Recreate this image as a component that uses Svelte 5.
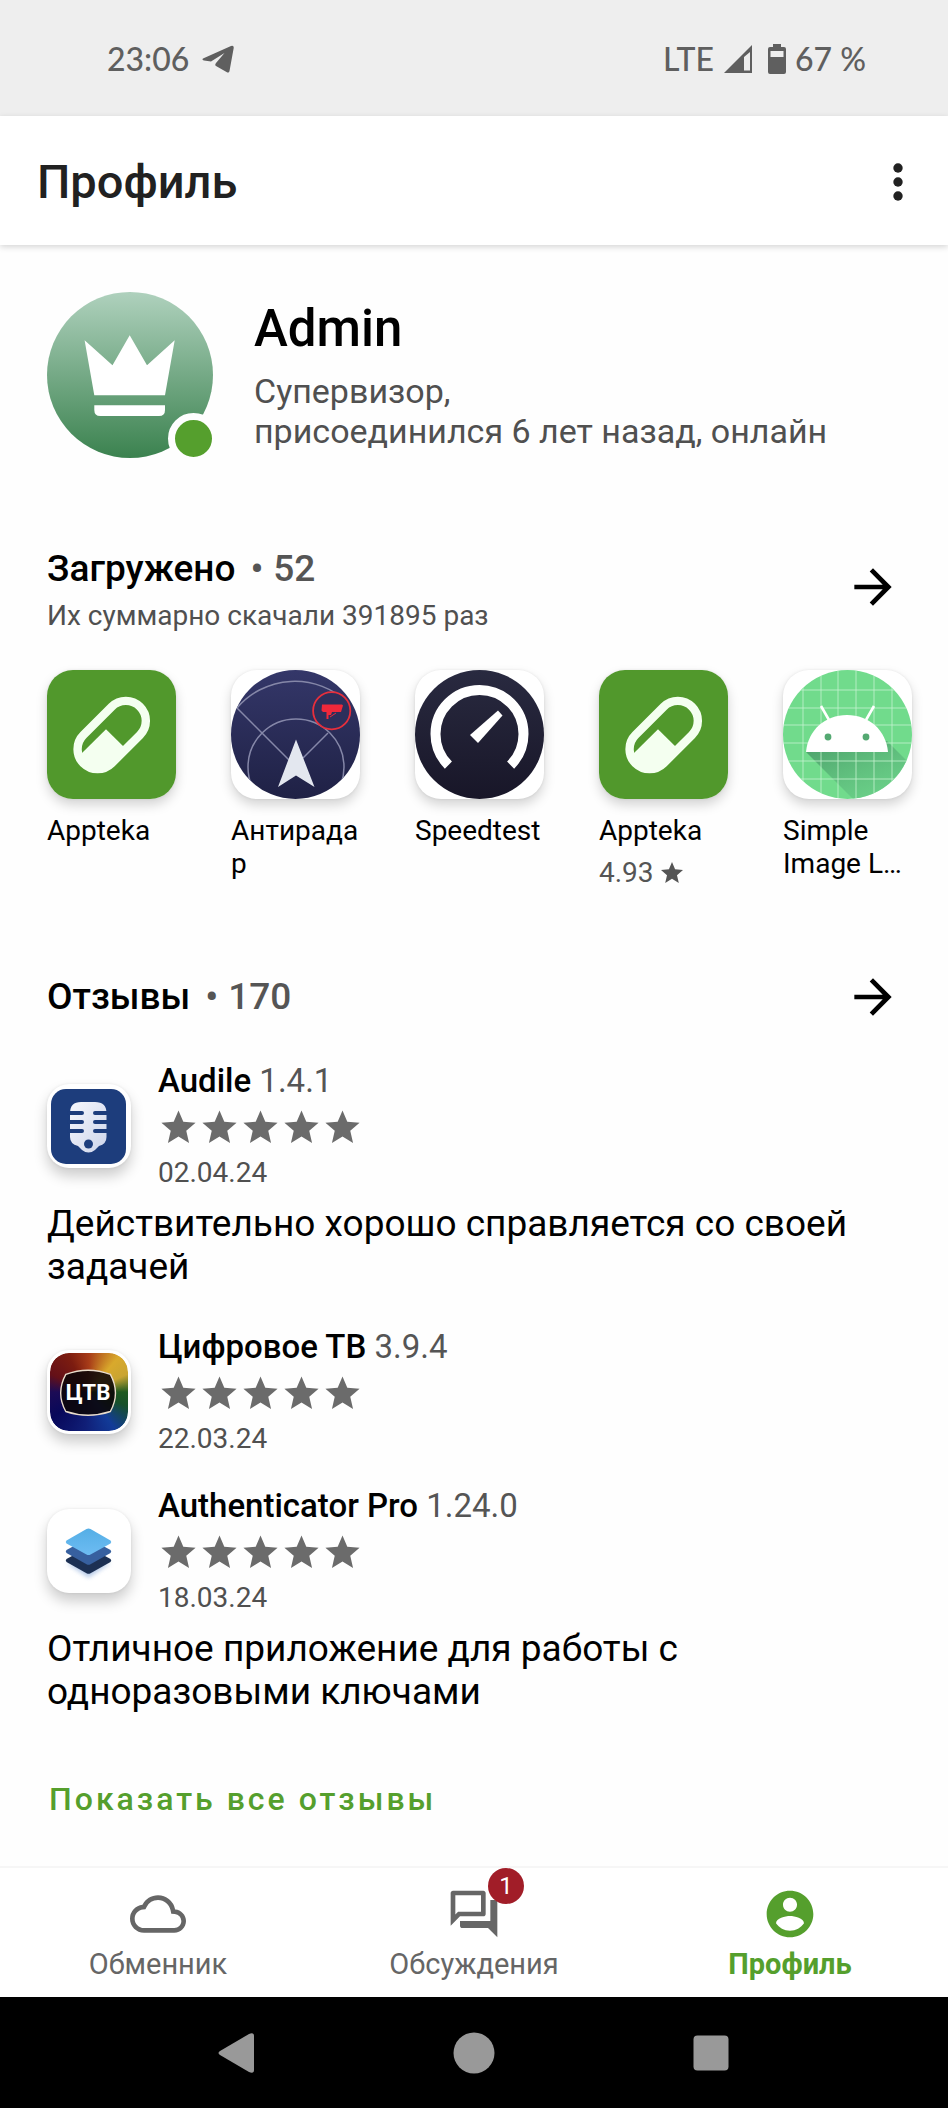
<script>
  const apps = [
    { name: 'Appteka', icon: 'pill' },
    { name: 'Антирадар', icon: 'radar' },
    { name: 'Speedtest', icon: 'speed' },
    { name: 'Appteka', icon: 'pill', rating: '4.93' },
    { name: 'Simple Image L…', icon: 'android' }
  ];
  const reviews = [
    { name: 'Audile', version: '1.4.1', date: '02.04.24', icon: 'mic', text: 'Действительно хорошо справляется со своей задачей' },
    { name: 'Цифровое ТВ', version: '3.9.4', date: '22.03.24', icon: 'tv' },
    { name: 'Authenticator Pro', version: '1.24.0', date: '18.03.24', icon: 'layers', text: 'Отличное приложение для работы с одноразовыми ключами' }
  ];
  const grid = [20, 38, 55, 73, 91, 109];
  const starPath = 'M12 17.27L18.18 21l-1.64-7.03L22 9.24l-7.19-.61L12 2 9.19 8.63 2 9.24l5.46 4.73L5.82 21z';
</script>

{#snippet arrow()}
  <svg viewBox="0 0 24 24" width="56" height="56" aria-hidden="true"><path d="M12 4l-1.41 1.41L16.17 11H4v2h12.17l-5.58 5.59L12 20l8-8z" fill="#000" /></svg>
{/snippet}

{#snippet appIcon(kind)}
  <svg viewBox="0 0 129 129" aria-hidden="true">
    {#if kind === 'pill'}
      <rect width="129" height="129" fill="#51982c" />
      <rect x="24.7" y="45" width="80" height="40" rx="20" fill="none" stroke="#f4fff0" stroke-width="8.4" transform="rotate(-45 64.7 65)" />
      <path d="M34 84L59 59.3 77.5 77.5 64 92A19 19 0 0 1 34 84z" fill="#f4fff0" />
    {:else if kind === 'radar'}
      <defs>
        <linearGradient id="radar-bg" x1="0" y1="0" x2="0" y2="1"><stop offset="0" stop-color="#343769" /><stop offset="1" stop-color="#1f2145" /></linearGradient>
        <clipPath id="radar-clip"><circle cx="64.5" cy="64.5" r="64.5" /></clipPath>
      </defs>
      <g clip-path="url(#radar-clip)">
        <rect width="129" height="129" fill="url(#radar-bg)" />
        <g fill="none" stroke="#8587a8" stroke-width="1.5">
          <path d="M6 38A76 76 0 0 1 116 32M6 38L58 90M72 88L97 63" />
          <circle cx="65" cy="97" r="48" />
        </g>
      </g>
      <path d="M65 69.5L83.5 117 65 105.5 47 117z" fill="#e3e7ef" />
      <circle cx="100.7" cy="40.7" r="18.6" fill="#2d2f5b" stroke="#e62f3c" stroke-width="1.8" />
      <path d="M91 34.5h20l1 1-2 6.500h-9l-1 3h-2.500v4h-2v-7H92l-1.500-1.500z" fill="#f0283a" />
      <path d="M99 47l6-4" stroke="#f0283a" stroke-width="1" />
    {:else if kind === 'speed'}
      <defs><linearGradient id="speed-bg" x1="0" y1="0" x2="0" y2="1"><stop offset="0" stop-color="#292a40" /><stop offset="1" stop-color="#181628" /></linearGradient></defs>
      <circle cx="64.5" cy="64.5" r="64.5" fill="url(#speed-bg)" />
      <path d="M33.400 95.100A44 44 0 1 1 95.600 95.100" fill="none" stroke="#fff" stroke-width="10" />
      <path d="M83 40.500L87.500 45.500 63 73 55 65z" fill="#fff" />
    {:else}
      <defs>
        <clipPath id="droid-clip"><circle cx="64.500" cy="64.500" r="64.500" /></clipPath>
        <linearGradient id="droid-shadow" x1="0" y1="0" x2="0.700" y2="1"><stop offset="0" stop-color="#4a9c68" /><stop offset="1" stop-color="#66c986" stop-opacity=".5" /></linearGradient>
      </defs>
      <g clip-path="url(#droid-clip)">
        <rect width="129" height="129" fill="#71db8c" />
        <path d="M23 82L74 133H129V96L104 71z" fill="url(#droid-shadow)" />
        {#each grid as g}
          <path d="M{g} 0V129M0 {g}H129" stroke="#c5f3d0" stroke-width="1" stroke-opacity=".8" />
        {/each}
      </g>
      <path d="M23 82C25 60 42 45 64 45S103 60 105 82z" fill="#fff" />
      <path d="M38 36L46 50M91 36L83 50" stroke="#fff" stroke-width="2.600" />
      <circle cx="45" cy="67" r="3.400" fill="#54a972" /><circle cx="83" cy="67" r="3.400" fill="#54a972" />
    {/if}
  </svg>
{/snippet}

{#snippet reviewIcon(kind)}
  <svg viewBox="0 0 84 84" aria-hidden="true">
    {#if kind === 'mic'}
      <defs><linearGradient id="mic-fill" x1="0" y1="0" x2="1" y2="1"><stop offset="0" stop-color="#f6f7fd" /><stop offset="1" stop-color="#cdd5ea" /></linearGradient></defs>
      <rect x="4" y="5" width="75" height="75" rx="15" fill="#1d3d7c" />
      <path d="M34 18H48Q59.500 18 59.500 29V53Q59.500 60 52 62L48 66Q41.500 71 35 66L31 62Q23 60 23 53V29Q23 18 34 18z" fill="url(#mic-fill)" />
      <path d="M22 29H35M22 38H35M22 47H35M48 29H61M48 38H61M48 47H61" stroke="#1d3d7c" stroke-width="4" stroke-linecap="round" />
      <circle cx="41.500" cy="60" r="4.500" fill="#1d3d7c" />
    {:else if kind === 'tv'}
      <path d="M17 23Q41 14 65 23Q76 43 65 63Q41 71 17 63Q6 43 17 23z" fill="#0b0608" fill-opacity=".88" stroke="#e9dccb" stroke-width="1.500" />
      <text x="41" y="51" text-anchor="middle" font-family="Roboto, sans-serif" font-size="24" font-weight="700" fill="#fff">ЦТВ</text>
    {:else}
      <defs>
        <linearGradient id="layer-top" x1="0" y1="0" x2="0" y2="1"><stop offset="0" stop-color="#54aee6" /><stop offset="1" stop-color="#6dbcf2" /></linearGradient>
        <filter id="layer-glow" x="-30%" y="-30%" width="160%" height="160%"><feGaussianBlur stdDeviation="2" /></filter>
      </defs>
      <path d="M19 54L41.500 69 64 54z" fill="#9fb9e0" filter="url(#layer-glow)" opacity=".7" />
      <path d="M19.500 50L41.500 38 63.500 50Q65 51.500 63.500 53L43.500 64.300Q41.500 65.300 39.500 64.300L19.500 53Q18 51.500 19.500 50z" fill="#1c3053" />
      <path d="M19.500 41L41.500 29 63.500 41Q65 42.500 63.500 44L43.500 55.300Q41.500 56.300 39.500 55.300L19.500 44Q18 42.500 19.500 41z" fill="#37609f" />
      <path d="M19.500 31.500L39.500 20Q41.500 19 43.500 20L63.500 31.500Q65 33 63.500 34.500L43.500 45.500Q41.500 46.500 39.500 45.500L19.500 34.500Q18 33 19.500 31.500z" fill="url(#layer-top)" />
    {/if}
  </svg>
{/snippet}

<div class="page">
  <div class="status">
    <div class="group">
      <span>23:06</span>
      <svg class="plane" viewBox="0 0 32 28" width="32" height="28" aria-hidden="true"><path d="M1 13.500L29 1Q32 0 31.700 3L27.500 26Q27 28.500 24.500 27L14 21Q12.500 20 14 18L22.500 8 9 16.500 2 15.500Q-.5 14.500 1 13.500z" fill="#5f5f5f" /></svg>
    </div>
    <div class="group">
      <span>LTE</span>
      <svg class="signal" viewBox="0 0 28 28" width="28" height="28" aria-hidden="true"><path d="M28 0V28H0zM26 7L20 12V25.500H26z" fill="#5f5f5f" fill-rule="evenodd" /></svg>
      <svg class="battery" viewBox="0 0 18 30" width="18" height="30" aria-hidden="true"><path d="M5 0H13V3H16Q18 3 18 5V28Q18 30 16 30H2Q0 30 0 28V5Q0 3 2 3H5zM2.500 7V13H15.500V7z" fill="#5f5f5f" fill-rule="evenodd" /></svg>
      <span>67 %</span>
    </div>
  </div>

  <header class="appbar">
    <h1>Профиль</h1>
    <button class="more" aria-label="Меню">
      <svg viewBox="0 0 10 38" width="10" height="38" aria-hidden="true"><circle cx="5" cy="5" r="4.700" /><circle cx="5" cy="19" r="4.700" /><circle cx="5" cy="33" r="4.700" /></svg>
    </button>
  </header>

  <main>
    <section class="profile">
      <div class="avatar">
        <svg viewBox="0 0 166 166" aria-hidden="true">
          <defs><linearGradient id="avatar-bg" x1="0" y1="0" x2="0" y2="1"><stop offset="0" stop-color="#afd1bd" /><stop offset="1" stop-color="#3b824f" /></linearGradient></defs>
          <circle cx="83" cy="83" r="83" fill="url(#avatar-bg)" />
          <path d="M37.600 48.300L65.500 73.300 82.700 43.300 100 73.300 127.700 48.300 118 103.300H47.300zM47.300 113.300H118V118Q118 124 112 124H53.300Q47.300 124 47.300 118z" fill="#fff" />
        </svg>
        <span class="online"></span>
      </div>
      <div class="about">
        <h2 class="name">Admin</h2>
        <p>Супервизор,<br />присоединился 6 лет назад, онлайн</p>
      </div>
    </section>

    <section class="uploads">
      <div class="head top">
        <div>
          <h2>Загружено <span class="count"><span>•</span><span>52</span></span></h2>
          <p class="sub">Их суммарно скачали 391895 раз</p>
        </div>
        <button class="go" aria-label="Загружено">{@render arrow()}</button>
      </div>
      <ul class="apps">
        {#each apps as app}
          <li>
            <div class="tile">{@render appIcon(app.icon)}</div>
            <span class="label">{app.name}</span>
            {#if app.rating}
              <span class="rating">{app.rating}<svg viewBox="2 2 20 19" width="22" height="21" aria-hidden="true"><path d={starPath} fill="#555" /></svg></span>
            {/if}
          </li>
        {/each}
      </ul>
    </section>

    <section class="reviews">
      <div class="head">
        <h2>Отзывы <span class="count"><span>•</span><span>170</span></span></h2>
        <button class="go" aria-label="Отзывы">{@render arrow()}</button>
      </div>
      {#each reviews as r}
        <article>
          <div class="review">
            <div class="tile small" class:tv={r.icon === 'tv'}>{@render reviewIcon(r.icon)}</div>
            <div class="meta">
              <h3>{r.name} <span>{r.version}</span></h3>
              <div class="stars" role="img" aria-label="5 из 5">
                {#each [1, 2, 3, 4, 5] as n (n)}
                  <svg viewBox="0 0 24 24" width="41" height="41" aria-hidden="true"><path d={starPath} fill="#6b6b6b" /></svg>
                {/each}
              </div>
              <time>{r.date}</time>
            </div>
          </div>
          {#if r.text}<p class="text">{r.text}</p>{/if}
        </article>
      {/each}
      <button class="all">Показать все отзывы</button>
    </section>
  </main>

  <nav class="tabs">
    <a href="#exchange">
      <svg viewBox="0 0 24 24" width="56" height="56" aria-hidden="true"><path d="M19.350 10.040A7.490 7.490 0 0 0 12 4C9.110 4 6.600 5.640 5.350 8.040A5.994 5.994 0 0 0 0 14c0 3.310 2.690 6 6 6h13c2.760 0 5-2.240 5-5 0-2.640-2.050-4.780-4.650-4.960zM19 18H6c-2.210 0-4-1.790-4-4 0-2.050 1.530-3.760 3.560-3.970l1.070-.11.5-.95A5.469 5.469 0 0 1 12 6c2.620 0 4.880 1.860 5.390 4.430l.3 1.500 1.530.11A2.980 2.980 0 0 1 22 15c0 1.650-1.350 3-3 3z" /></svg>
      Обменник
    </a>
    <a href="#talks">
      <span class="icon">
        <svg viewBox="0 0 24 24" width="56" height="56" aria-hidden="true"><path d="M15 4v7H5.170L4 12.170V4h11m1-2H3c-.55 0-1 .45-1 1v14l4-4h10c.55 0 1-.45 1-1V3c0-.55-.45-1-1-1zm5 4h-2v9H6v2c0 .55.45 1 1 1h11l4 4V7c0-.55-.45-1-1-1z" /></svg>
        <span class="badge">1</span>
      </span>
      Обсуждения
    </a>
    <a href="#profile" class="active" aria-current="page">
      <svg viewBox="0 0 24 24" width="56" height="56" aria-hidden="true"><path d="M12 2C6.480 2 2 6.480 2 12s4.480 10 10 10 10-4.480 10-10S17.520 2 12 2zm0 3c1.660 0 3 1.340 3 3s-1.340 3-3 3-3-1.340-3-3 1.340-3 3-3zm0 14.200c-2.500 0-4.710-1.280-6-3.220.030-1.990 4-3.080 6-3.080 1.990 0 5.970 1.090 6 3.080-1.290 1.940-3.500 3.220-6 3.220z" /></svg>
      Профиль
    </a>
  </nav>

  <div class="system">
    <button aria-label="Назад"><svg viewBox="0 0 42 42" width="42" height="42" aria-hidden="true"><path d="M4 19L33 2Q38 0 38 4V38Q38 42 33 40L4 23Q1 21 4 19z" /></svg></button>
    <button aria-label="Домой"><svg viewBox="0 0 42 42" width="42" height="42" aria-hidden="true"><circle cx="21" cy="21" r="20.500" /></svg></button>
    <button aria-label="Недавние"><svg viewBox="0 0 42 42" width="42" height="42" aria-hidden="true"><rect x="3.500" y="3.500" width="35" height="35" rx="4" /></svg></button>
  </div>
</div>

<style>
  :global(body) { margin: 0; background: #fefefe; }
  h1, h2, h3, p, ul { margin: 0; padding: 0; font-weight: 400; }
  button { border: 0; padding: 0; background: none; font: inherit; display: flex; align-items: center; justify-content: center; }
  svg { display: block; flex: none; }
  .page { min-height: 100vh; display: flex; flex-direction: column; font-family: Roboto, sans-serif; color: #000; overflow: hidden; }

  .status { display: flex; justify-content: space-between; align-items: center; padding: 39px 82px 37px 107px; background: #eee; color: #5f5f5f; font: 500 32px/40px Lato, sans-serif; }
  .group { display: flex; align-items: center; }
  .plane { margin-left: 13px; }
  .signal { margin-left: 10px; }
  .battery { margin: 0 9px 0 16px; }

  .appbar { display: flex; align-items: center; justify-content: space-between; padding: 36px 12px 33px 37px; background: #fff; box-shadow: 0 2px 6px rgba(0, 0, 0, .16); z-index: 1; }
  h1 { font-size: 47px; line-height: 60px; font-weight: 500; color: #212121; }
  .more { width: 76px; height: 60px; }
  .more svg { fill: #212121; }

  main { flex: 1; display: flex; flex-direction: column; padding: 47px 0 40px; }
  .profile { display: flex; align-items: center; gap: 41px; padding: 0 47px; }
  .avatar { position: relative; width: 166px; height: 166px; flex: none; }
  .online { position: absolute; right: -6px; bottom: -6px; width: 37px; height: 37px; border: 7px solid #fefefe; border-radius: 50%; background: #559f2d; }
  .about { display: flex; flex-direction: column; gap: 12px; }
  .name { font-size: 51px; line-height: 60px; font-weight: 500; }
  .about p { font-size: 34px; line-height: 40px; color: #505050; }

  .uploads { margin-top: 91px; }
  .head { display: flex; align-items: center; justify-content: space-between; padding: 0 37px 0 47px; }
  .head.top { align-items: flex-start; }
  .head h2 { display: flex; gap: 15px; font-size: 37px; line-height: 40px; font-weight: 500; }
  .count { display: flex; gap: 10px; color: #555; }
  .sub { margin-top: 12px; font-size: 28px; line-height: 30px; color: #505050; }
  .go { width: 76px; height: 76px; }

  .apps { display: flex; gap: 55px; margin-top: 39px; padding: 0 35px 0 47px; list-style: none; }
  .apps li { width: 129px; flex: none; }
  .tile { width: 129px; height: 129px; flex: none; border-radius: 26px; background: #fff; box-shadow: 0 6px 12px rgba(0, 0, 0, .17), 0 0 3px rgba(0, 0, 0, .08); }
  .tile svg { width: 100%; height: 100%; border-radius: inherit; }
  .label { display: block; margin-top: 15px; font-size: 28px; line-height: 33px; overflow-wrap: anywhere; }
  .rating { display: flex; align-items: center; gap: 7px; margin-top: 9px; font-size: 28px; line-height: 33px; color: #555; }

  .reviews { margin-top: 70px; display: flex; flex-direction: column; }
  article { margin: 0 47px 32px; }
  .head + article { margin-top: 27px; }
  .review { display: flex; align-items: center; gap: 27px; }
  .small { width: 84px; height: 84px; border-radius: 22px; box-shadow: 0 8px 14px rgba(0, 0, 0, .2), 0 0 3px rgba(0, 0, 0, .08); }
  .small.tv { box-sizing: border-box; border: 3px solid #fff; background: conic-gradient(#a83c18, #d9a92c 40deg, #c9a431 65deg, #1f5a20 90deg, #17502a 110deg, #123b98 145deg, #101f78 185deg, #08085a 235deg, #1c0b55 270deg, #641018 295deg, #7c1c10 330deg, #a83c18) padding-box, #fff border-box; }
  h3 { font-size: 33px; line-height: 38px; font-weight: 500; }
  h3 span { font-weight: 400; color: #555; }
  .stars { display: flex; margin: 7px 0 8px; }
  time { display: block; font-size: 28px; line-height: 33px; color: #505050; }
  .text { margin-top: 13px; padding-bottom: 8px; font-size: 37px; line-height: 43px; }
  .all { align-self: flex-start; margin: 27px 49px 0; color: #559f2d; font-size: 32px; line-height: 38px; font-weight: 500; letter-spacing: 3px; }

  .tabs { display: grid; grid-template-columns: repeat(3, 1fr); padding: 18px 0 16px; border-top: 2px solid #f6f6f6; background: #fff; }
  .tabs a { display: flex; flex-direction: column; align-items: center; gap: 6px; font-size: 29px; line-height: 33px; color: #666; text-decoration: none; }
  .tabs svg { fill: currentColor; }
  .tabs .active { color: #559f2d; font-weight: 700; }
  .icon { position: relative; }
  .badge { position: absolute; left: 42px; top: -18px; width: 36px; height: 36px; border-radius: 50%; background: #a11d28; color: #fff; font-size: 24px; line-height: 36px; text-align: center; }

  .system { display: flex; justify-content: space-around; padding: 35px 12.5% 34px; background: #000; }
  .system svg { fill: #999; }
</style>
